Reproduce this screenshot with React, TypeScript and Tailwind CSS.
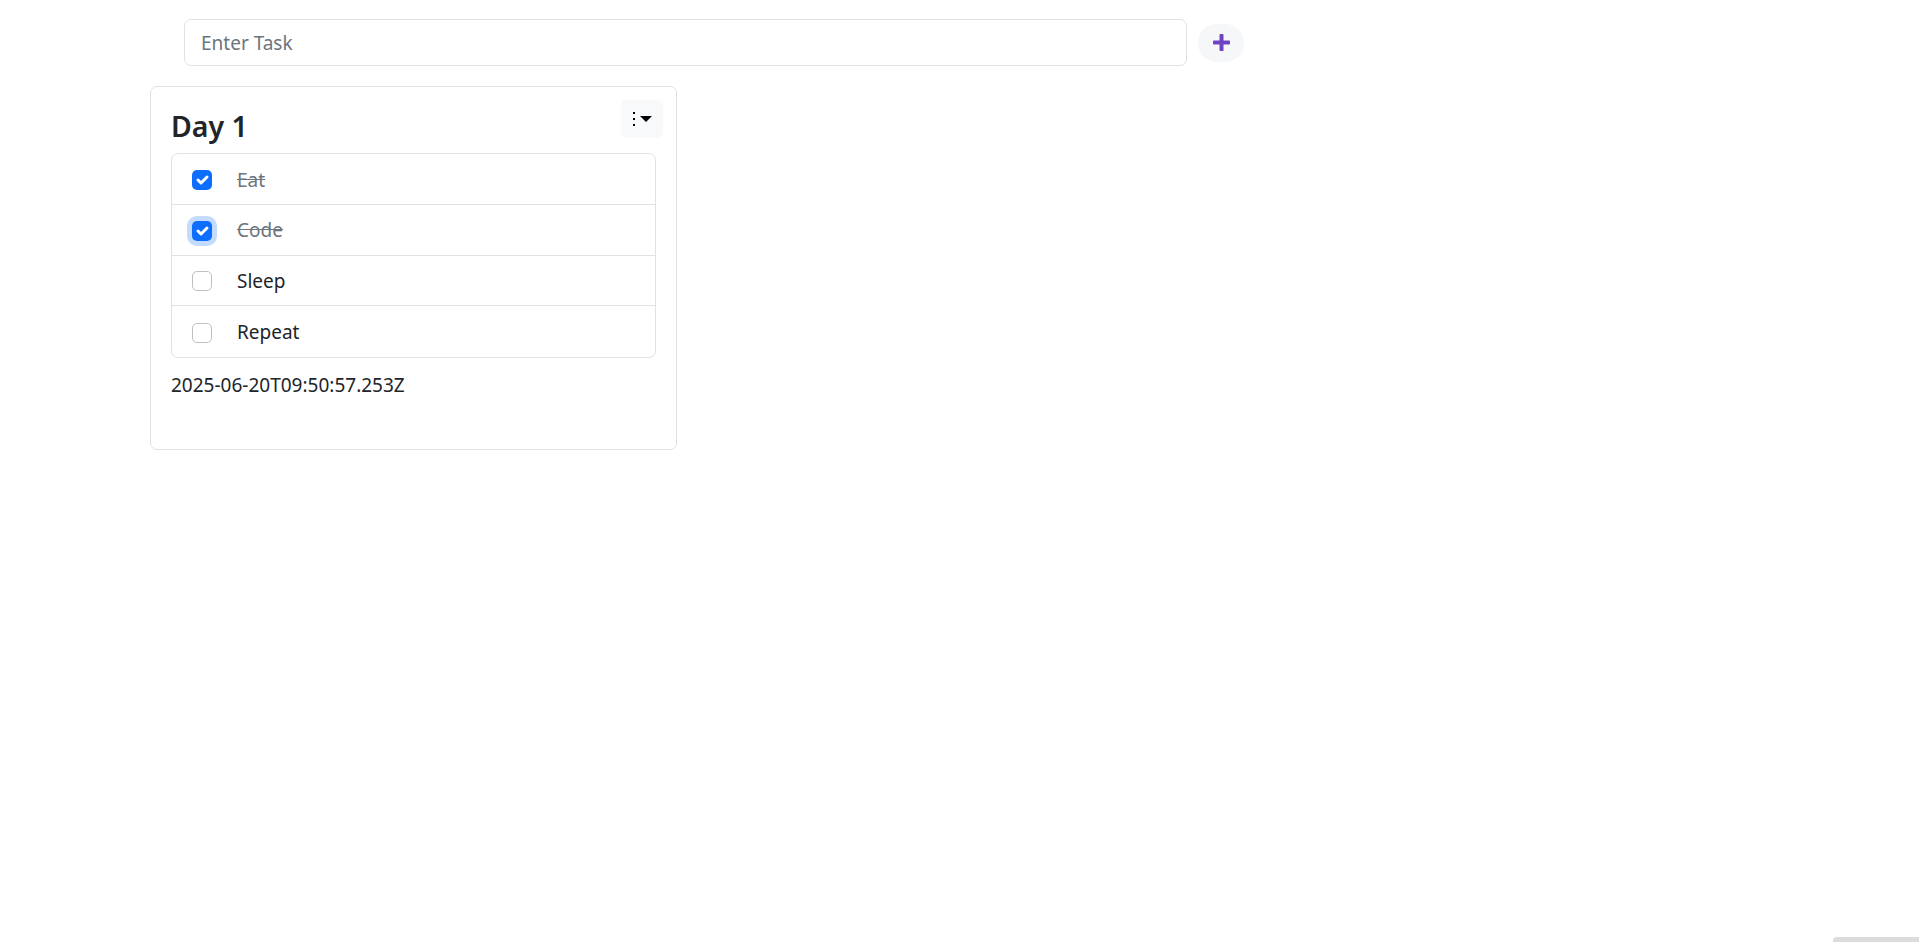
import React from 'react';

type Task = { id: number; text: string; done: boolean; focused?: boolean };

const tasks: Task[] = [
    { id: 1, text: 'Eat', done: true },
    { id: 2, text: 'Code', done: true, focused: true },
    { id: 3, text: 'Sleep', done: false },
    { id: 4, text: 'Repeat', done: false },
];

const Check = ({ checked, focused }: { checked: boolean; focused?: boolean }) => {
    if (!checked) {
        return <span className="block w-[20px] h-[20px] shrink-0 rounded-[5px] border border-[#bfbfbf] bg-white"></span>;
    }
    return (
        <span
            className={`flex items-center justify-center w-[20px] h-[20px] shrink-0 rounded-[5px] bg-[#0d6efd] ${
                focused ? 'shadow-[0_0_0_5px_rgba(13,110,253,0.25)]' : ''
            }`}
        >
            <svg viewBox="0 0 20 20" className="w-[20px] h-[20px]">
                <path d="m6 10 3 3 6-6" fill="none" stroke="#fff" strokeWidth="3" strokeLinecap="round" strokeLinejoin="round" />
            </svg>
        </span>
    );
};

const App = () => {
    return (
        <div className="min-h-[942px] bg-white font-['Noto_Sans',sans-serif] text-[#212529] pt-[19px]">
            {/* add task row */}
            <div className="flex items-center gap-[11px] pl-[184px]">
                <input
                    type="text"
                    placeholder="Enter Task"
                    className="w-[1003px] h-[47px] px-[16px] rounded-[7px] border border-[#dee2e6] text-[19px] outline-none placeholder:text-[#6c757d]"
                />
                <button className="flex items-center justify-center w-[46px] h-[38px] rounded-full bg-[#f6f7f9]">
                    <svg viewBox="0 0 17 17" className="w-[17px] h-[17px]">
                        <rect x="6.5" y="0" width="4" height="17" rx="1" fill="#6f42c1" />
                        <rect x="0" y="6.5" width="17" height="4" rx="1" fill="#6f42c1" />
                    </svg>
                </button>
            </div>

            {/* day card */}
            <div className="relative ml-[150px] mt-[20px] w-[527px] rounded-[7px] border border-[#dee2e6] px-[20px] pt-[20px] pb-[20px]">
                <button className="absolute top-[13px] right-[13px] flex items-center justify-center gap-[5px] w-[42px] h-[38px] rounded-[6px] bg-[#f8f9fa]">
                    <svg viewBox="0 0 2 16" className="w-[2px] h-[16px]">
                        <rect x="0" y="1" width="2" height="2" fill="#000" />
                        <rect x="0" y="7" width="2" height="2" fill="#000" />
                        <rect x="0" y="13" width="2" height="2" fill="#000" />
                    </svg>
                    <span className="block w-0 h-0 border-t-[6px] border-t-black border-x-[6px] border-x-transparent"></span>
                </button>

                <h4 className="mt-[2px] text-[28.5px] leading-[35px] font-semibold mb-[9px]">Day 1</h4>

                <ul className="rounded-[7px] border border-[#dee2e6] divide-y divide-[#dee2e6]">
                    {tasks.map(t => (
                        <li key={t.id} className="flex items-center gap-[25px] h-[50.75px] px-[20px] pt-[2px]">
                            <Check checked={t.done} focused={t.focused} />
                            <span className={`text-[19px] ${t.done ? 'line-through text-[#6c757d]' : ''}`}>{t.text}</span>
                        </li>
                    ))}
                </ul>

                <p className="mt-[13px] mb-[29px] text-[19px] leading-[29px]">2025-06-20T09:50:57.253Z</p>
            </div>

            <div className="fixed bottom-0 right-0 w-[86px] h-[5px] rounded-tl-[4px] bg-[#dcdcdc]"></div>
        </div>
    );
};

export default App;
